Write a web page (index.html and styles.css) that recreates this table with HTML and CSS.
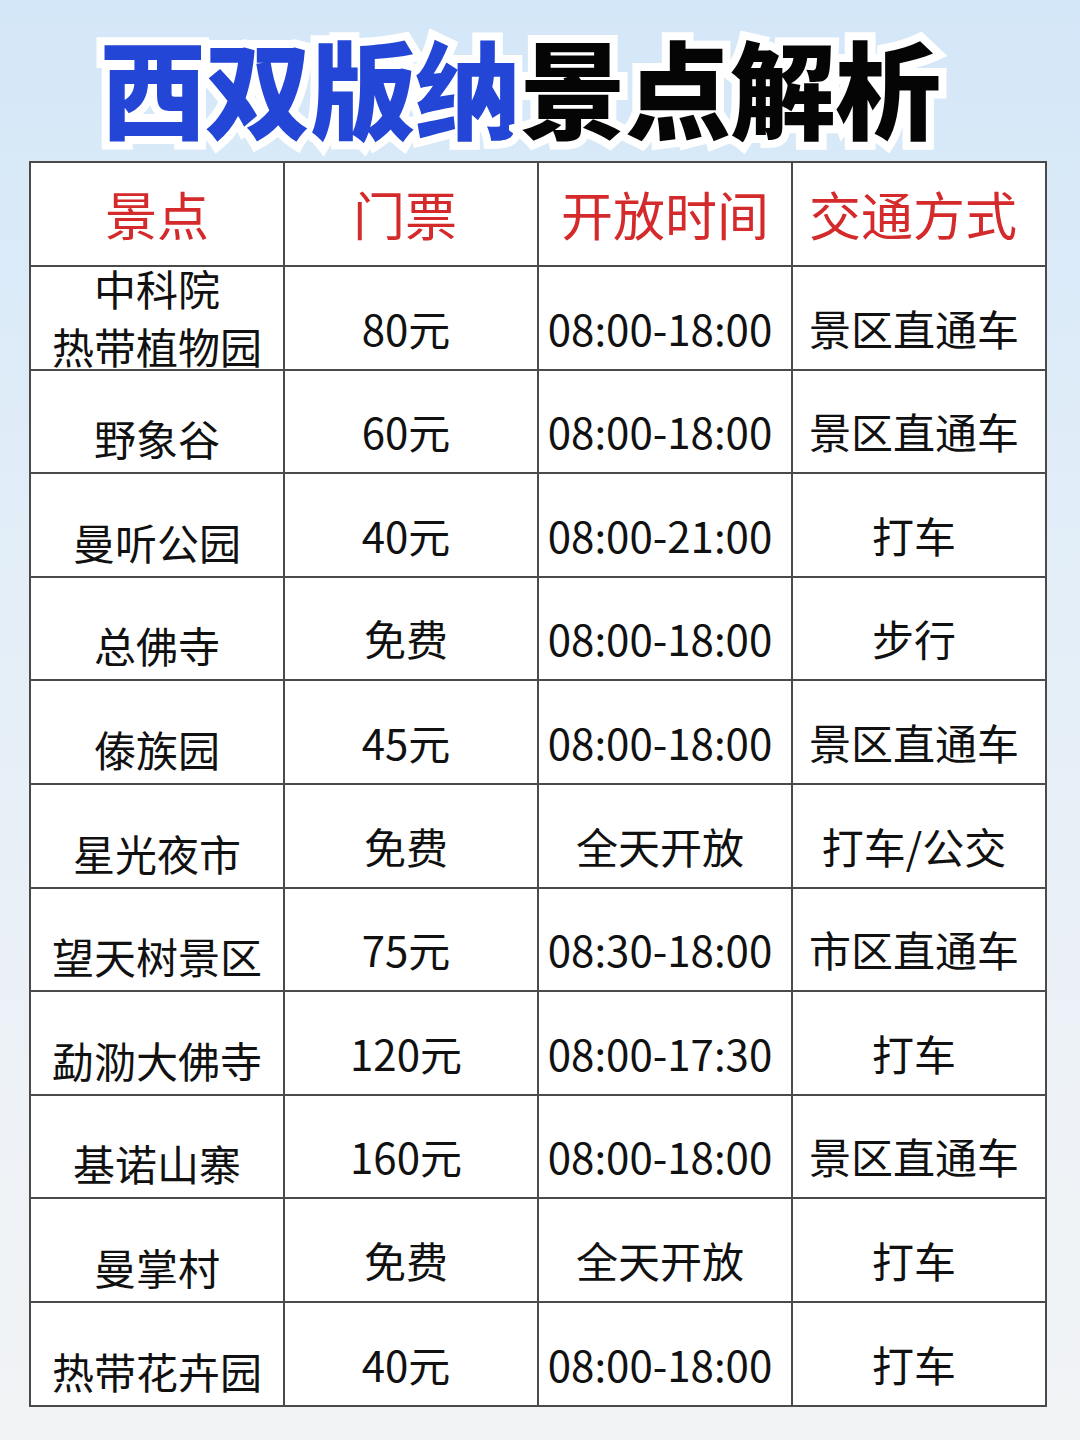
FILE: index.html
```html
<!DOCTYPE html>
<html lang="zh">
<head>
<meta charset="utf-8">
<link rel="stylesheet" href="styles.css">
</head>
<body>
<div class="page">
  <h1 class="title"><span class="blue">西双版纳</span><span class="black">景点解析</span></h1>
  <div class="grid">
    <div class="th">景点</div><div class="th shift">门票</div><div class="th">开放时间</div><div class="th shift">交通方式</div>
    <div class="td name two"><span>中科院</span><span>热带植物园</span></div><div class="td">80元</div><div class="td">08:00-18:00</div><div class="td">景区直通车</div>
    <div class="td name">野象谷</div><div class="td">60元</div><div class="td">08:00-18:00</div><div class="td">景区直通车</div>
    <div class="td name">曼听公园</div><div class="td">40元</div><div class="td">08:00-21:00</div><div class="td">打车</div>
    <div class="td name">总佛寺</div><div class="td">免费</div><div class="td">08:00-18:00</div><div class="td">步行</div>
    <div class="td name">傣族园</div><div class="td">45元</div><div class="td">08:00-18:00</div><div class="td">景区直通车</div>
    <div class="td name">星光夜市</div><div class="td">免费</div><div class="td">全天开放</div><div class="td">打车/公交</div>
    <div class="td name">望天树景区</div><div class="td">75元</div><div class="td">08:30-18:00</div><div class="td">市区直通车</div>
    <div class="td name">勐泐大佛寺</div><div class="td">120元</div><div class="td">08:00-17:30</div><div class="td">打车</div>
    <div class="td name">基诺山寨</div><div class="td">160元</div><div class="td">08:00-18:00</div><div class="td">景区直通车</div>
    <div class="td name">曼掌村</div><div class="td">免费</div><div class="td">全天开放</div><div class="td">打车</div>
    <div class="td name">热带花卉园</div><div class="td">40元</div><div class="td">08:00-18:00</div><div class="td">打车</div>
  </div>
</div>
</body>
</html>
```

FILE: styles.css
```css
html, body {
  margin: 0;
  padding: 0;
}
body {
  width: 1080px;
  height: 1440px;
  background: linear-gradient(180deg, #d4e7f8 0%, #e3eef8 40%, #eef2f6 80%, #f1f3f5 100%);
  font-family: "Noto Sans CJK SC", "Noto Sans", sans-serif;
  overflow: hidden;
}
.page {
  display: flex;
  flex-direction: column;
  align-items: flex-start;
}
.title {
  margin: 0;
  height: 161px;
  width: 1080px;
  display: flex;
  justify-content: center;
  align-items: center;
  padding-left: 10px;
  padding-right: 50px;
  padding-top: 8px;
  box-sizing: border-box;
  font-size: 106px;
  font-weight: 900;
  line-height: 1;
  letter-spacing: -1px;
  -webkit-text-stroke: 16px #ffffff;
  paint-order: stroke fill;
}
.blue { color: #2446d6; }
.black { color: #050505; }
.grid {
  margin-left: 29px;
  display: grid;
  grid-template-columns: repeat(4, 254px);
  grid-template-rows: 104px repeat(11, 103.6px);
  border-left: 2px solid #4a4a4a;
  border-top: 2px solid #4a4a4a;
  background: #ffffff;
}
.th, .td {
  border-right: 2px solid #4a4a4a;
  border-bottom: 2px solid #4a4a4a;
  display: flex;
  justify-content: center;
  align-items: center;
  text-align: center;
  white-space: nowrap;
  overflow: hidden;
}
.th {
  color: #d42a2c;
  font-size: 52px;
  font-weight: 400;
  padding-bottom: 2px;
}
.th.shift {
  padding-right: 12px;
}
.td {
  color: #111111;
  font-size: 42px;
  line-height: 1.2;
  padding-top: 20px;
  padding-right: 10px;
}
.td.name {
  padding-top: 34px;
  padding-right: 0;
}
.td.name.two {
  flex-direction: column;
  justify-content: flex-start;
  padding-top: 0;
  line-height: 58px;
  overflow: visible;
}
.td.name.two span:first-child {
  margin-top: -8px;
}
```
